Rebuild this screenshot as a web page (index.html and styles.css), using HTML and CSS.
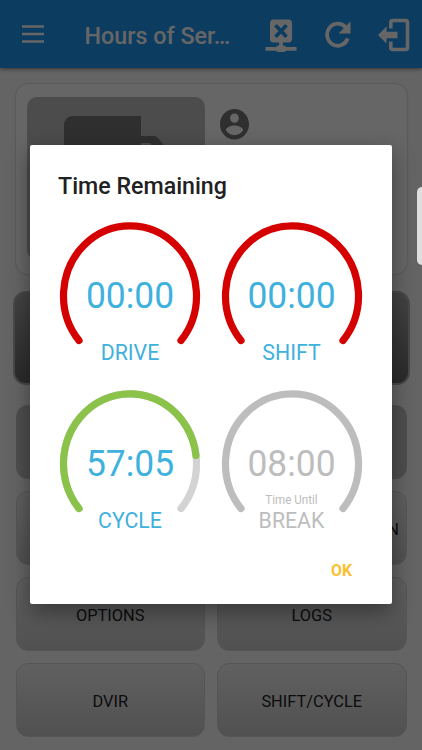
FILE: index.html
```
<!DOCTYPE html>
<html lang="en">
<head>
  <meta charset="UTF-8" />
  <meta name="viewport" content="width=device-width, initial-scale=1.0">
  <title>Hours of Service</title>
  <link rel="stylesheet" href="styles.css">
</head>
<body>
  <header class="topbar">
    <svg class="icon-menu" width="22" height="18" viewBox="0 0 22 18"><path d="M0 1.500h22M0 9h22M0 16.500h22" stroke="#fff" stroke-width="2.700"/></svg>
    <h1 class="topbar-title"><span class="tall">Hours of Ser…</span></h1>
    <svg class="icon-network" width="32" height="34" viewBox="0 0 32 34">
      <rect x="5" y="1.500" width="22" height="23" rx="3.500" fill="#fff"/>
      <path d="M10.500 7.200l11 11.600M21.500 7.200l-11 11.600" stroke="#2196f3" stroke-width="3.600"/>
      <path d="M16 24v6M0.500 30.800h31" stroke="#fff" stroke-width="3.800"/>
      <rect x="11" y="27.500" width="10" height="6.500" rx="2.500" fill="#fff"/>
    </svg>
    <svg class="icon-refresh" width="26" height="27" viewBox="0 0 26 27">
      <path d="M20.500 6.200A10.600 11 0 1 0 22.700 17.500" fill="none" stroke="#fff" stroke-width="3.800"/>
      <path d="M25.500 0.500v12H13.500z" fill="#fff"/>
    </svg>
    <svg class="icon-exit" width="32" height="34" viewBox="0 0 32 34">
      <path d="M12.800 10.500V4.500a2 2 0 0 1 2-2H27.500a2 2 0 0 1 2 2v25a2 2 0 0 1-2 2H14.800a2 2 0 0 1-2-2v-6" fill="none" stroke="#fff" stroke-width="3.600"/>
      <path d="M0 17l8.500-8.500v5.300H19.500v6.400H8.500v5.300z" fill="#fff"/>
    </svg>
  </header>

  <main class="home">
    <section class="status-card">
      <div class="vehicle">
        <svg width="113" height="82" viewBox="0 0 113 82"><path fill="#757575" d="M8 0h69v20h13q3 0 5 3l16 22v23H98a13 13 0 0 1-26 0H39a13 13 0 0 1-26 0H0V9a8 9 0 0 1 8-9zM77 27v18h21L86 27z"/></svg>
      </div>
      <svg class="icon-user" width="29" height="30.500" viewBox="2 2 20 20" preserveAspectRatio="none"><path fill="#757575" d="M12 2C6.480 2 2 6.480 2 12s4.480 10 10 10 10-4.480 10-10S17.520 2 12 2zm0 3c1.660 0 3 1.340 3 3s-1.340 3-3 3-3-1.340-3-3 1.340-3 3-3zm0 14.200c-2.500 0-4.710-1.280-6-3.220.03-1.990 4-3.080 6-3.080 1.990 0 5.970 1.090 6 3.080-1.290 1.940-3.500 3.220-6 3.220z"/></svg>
    </section>
    <div class="duty"></div>
    <div class="menu">
      <div class="btn btn-flat"></div>
      <div class="btn btn-flat"></div>
      <div class="btn"></div>
      <div class="btn"><span class="tall">ROADSIDE INSPECTION</span></div>
      <div class="btn"><span class="tall">OPTIONS</span></div>
      <div class="btn"><span class="tall">LOGS</span></div>
      <div class="btn"><span class="tall">DVIR</span></div>
      <div class="btn"><span class="tall">SHIFT/CYCLE</span></div>
    </div>
  </main>

  <div class="overlay">
    <div class="dialog">
      <h2 class="dialog-title"><span class="tall">Time Remaining</span></h2>
      <div class="dials">
        <div class="dial">
          <svg class="arc" viewBox="0 0 142 128"><path class="red" d="M20 118.500A66.500 69.800 0 1 1 122 118.500"/></svg>
          <span class="time tall">00:00</span>
          <span class="name tall">DRIVE</span>
        </div>
        <div class="dial">
          <svg class="arc" viewBox="0 0 142 128"><path class="red" d="M20 118.500A66.500 69.800 0 1 1 122 118.500"/></svg>
          <span class="time tall">00:00</span>
          <span class="name tall">SHIFT</span>
        </div>
        <div class="dial">
          <svg class="arc" viewBox="0 0 142 128">
            <path class="track" d="M20 118.500A66.500 69.800 0 1 1 122 118.500"/>
            <path class="green" d="M20 118.500A66.500 69.800 0 1 1 137 65.500"/>
          </svg>
          <span class="time tall">57:05</span>
          <span class="name tall">CYCLE</span>
        </div>
        <div class="dial dial-off">
          <svg class="arc" viewBox="0 0 142 128"><path class="grey" d="M20 118.500A66.500 69.800 0 1 1 122 118.500"/></svg>
          <span class="time tall">08:00</span>
          <span class="hint tall">Time Until</span>
          <span class="name tall">BREAK</span>
        </div>
      </div>
      <div class="actions"><span class="ok tall">OK</span></div>
    </div>
  </div>
  <div class="edge-handle"></div>
</body>
</html>
```

FILE: styles.css
```
* {
  box-sizing: border-box;
}

body {
  margin: 0;
  width: 422px;
  height: 750px;
  overflow: hidden;
  position: relative;
  background: #fafafa;
  font-family: Roboto, "Liberation Sans", sans-serif;
}

svg {
  display: block;
  flex: none;
}

.tall {
  display: inline-block;
  transform: scaleY(1.05);
}

/* top bar */
.topbar {
  display: flex;
  align-items: center;
  height: 68px;
  padding: 0 12px 0 22px;
  background: #2196f3;
  box-shadow: 0 1px 4px rgba(0, 0, 0, 0.5);
}

.topbar-title {
  flex: 1;
  margin: 4px 0 0 40.500px;
  color: #fff;
  font-size: 23.300px;
  font-weight: 500;
  line-height: 28px;
  white-space: nowrap;
}

.icon-network {
  margin-top: 1px;
}

.icon-refresh {
  margin-left: 28px;
}

.icon-exit {
  margin: 1px 0 0 27.500px;
}

/* home screen */
.home {
  padding: 16px 15.500px 0;
}

.status-card {
  display: flex;
  align-items: flex-start;
  height: 190px;
  padding: 13px 11.500px;
  border-radius: 12px;
  background: #fff;
  box-shadow: 0 0 2px rgba(0, 0, 0, 0.35);
}

.vehicle {
  width: 178px;
  height: 163px;
  padding: 19px 0 0 37px;
  border-radius: 10px;
  background: #bdbdbd;
}

.icon-user {
  margin: 12px 0 0 14.500px;
}

.duty {
  height: 94px;
  margin: 17px -3px 20px;
  border: 2px solid #b4b4b4;
  border-radius: 13px;
  background: linear-gradient(#aaa, #696969);
}

.menu {
  display: grid;
  grid-template-columns: 1fr 1fr;
  grid-auto-rows: 74px;
  gap: 12px;
}

.btn {
  display: flex;
  align-items: center;
  justify-content: center;
  padding-top: 2px;
  border: 1px solid #d4d4d8;
  border-radius: 12px;
  background: linear-gradient(#f0f0f3, #cacaca);
  color: #212121;
  font-size: 16.400px;
  white-space: nowrap;
}

.btn-flat {
  border: 0;
  background: #c4c4c4;
}

/* dialog */
.overlay {
  position: absolute;
  inset: 0;
  display: flex;
  align-items: center;
  justify-content: center;
  padding-bottom: 1px;
  background: rgba(0, 0, 0, 0.6);
}

.dialog {
  width: 362px;
  height: 459px;
  padding: 27px 28px 0 29px;
  border-radius: 2px;
  background: #fff;
  box-shadow: 0 8px 22px rgba(0, 0, 0, 0.4);
}

.dialog-title {
  margin: 0 0 22px -1px;
  color: #212121;
  font-size: 23.200px;
  font-weight: 500;
  line-height: 28px;
}

.dials {
  display: grid;
  grid-template-columns: 142px 142px;
  column-gap: 19.500px;
  grid-auto-rows: 168px;
}

.dial {
  display: grid;
  grid-template-rows: 53px 40px 10px 14px 26px;
  justify-items: center;
  align-items: end;
  color: #3eb1de;
}

.arc {
  grid-area: 1 / 1 / 6 / 2;
  align-self: start;
  width: 142px;
  height: 128px;
}

.arc path {
  fill: none;
  stroke-width: 7.200;
  stroke-linecap: round;
}

.arc .red {
  stroke: #d50000;
}

.arc .green {
  stroke: #8bc34a;
}

.arc .track {
  stroke: #d3d3d3;
}

.arc .grey {
  stroke: #bdbdbd;
}

.time {
  grid-area: 2 / 1;
  font-size: 35.400px;
  line-height: 40px;
}

.hint {
  grid-area: 4 / 1;
  font-size: 11.600px;
  line-height: 14px;
}

.name {
  grid-area: 5 / 1;
  font-size: 21.300px;
  line-height: 24px;
}

.dial-off {
  color: #bdbdbd;
}

.actions {
  display: flex;
  justify-content: flex-end;
  padding: 1px 12px 0;
}

.ok {
  color: #fbc02d;
  font-size: 15.800px;
  font-weight: 700;
  line-height: 24px;
}

/* side panel handle sits over everything at the screen edge */
.edge-handle {
  position: absolute;
  top: 187px;
  right: 0;
  width: 5.500px;
  height: 78px;
  border-radius: 5px 0 0 5px;
  background: #dedede;
}
```
